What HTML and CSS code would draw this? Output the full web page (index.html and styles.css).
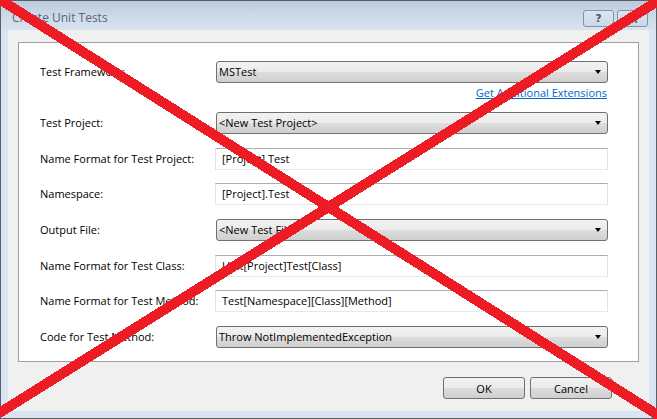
FILE: index.html
```html
<!DOCTYPE html>
<html>
<head>
<meta charset="utf-8">
<title>Create Unit Tests</title>
<link rel="stylesheet" href="styles.css">
</head>
<body>
<div class="window">
  <div class="titlebar">
    <span class="title">Create Unit Tests</span>
    <div class="caption-buttons">
      <span class="cap-btn help">?</span>
      <span class="cap-btn close">
        <svg width="11" height="9" viewBox="0 0 11 9"><path d="M1 0.5 L10 8.5 M10 0.5 L1 8.5" stroke="#5f6b7a" stroke-width="2" fill="none"/></svg>
      </span>
    </div>
  </div>
  <div class="frame">
    <div class="client">
      <div class="panel">
        <div class="row">
          <label class="lbl">Test Framework:</label>
          <div class="combo"><span>MSTest</span><i class="arrow"></i></div>
        </div>
        <div class="linkrow"><a class="link" href="#">Get Additional Extensions</a></div>
        <div class="rows">
          <div class="row">
            <label class="lbl">Test Project:</label>
            <div class="combo"><span>&lt;New Test Project&gt;</span><i class="arrow"></i></div>
          </div>
          <div class="row">
            <label class="lbl">Name Format for Test Project:</label>
            <div class="textbox">[Project].Test</div>
          </div>
          <div class="row">
            <label class="lbl">Namespace:</label>
            <div class="textbox">[Project].Test</div>
          </div>
          <div class="row">
            <label class="lbl">Output File:</label>
            <div class="combo"><span>&lt;New Test File&gt;</span><i class="arrow"></i></div>
          </div>
          <div class="row">
            <label class="lbl">Name Format for Test Class:</label>
            <div class="textbox">Unit[Project]Test[Class]</div>
          </div>
          <div class="row">
            <label class="lbl">Name Format for Test Method:</label>
            <div class="textbox">Test[Namespace][Class][Method]</div>
          </div>
          <div class="row">
            <label class="lbl">Code for Test Method:</label>
            <div class="combo"><span>Throw NotImplementedException</span><i class="arrow"></i></div>
          </div>
        </div>
      </div>
      <div class="buttons">
        <button class="btn">OK</button>
        <button class="btn">Cancel</button>
      </div>
    </div>
  </div>
</div>
<svg class="cross" width="657" height="419" viewBox="0 0 657 419">
  <line x1="-4" y1="-3" x2="661" y2="417" stroke="#ed1c24" stroke-width="10" shape-rendering="crispEdges"/>
  <line x1="-4" y1="415" x2="661" y2="-1" stroke="#ed1c24" stroke-width="10" shape-rendering="crispEdges"/>
</svg>
</body>
</html>
```

FILE: styles.css
```css
html, body {
  margin: 0;
  padding: 0;
}
body {
  width: 657px;
  height: 419px;
  overflow: hidden;
  position: relative;
  font-family: "Open Sans", "Noto Sans", "Liberation Sans", sans-serif;
  font-size: 11px;
  color: #000;
}
.window {
  width: 657px;
  height: 419px;
  box-sizing: border-box;
  border: 1px solid #5b5f66;
  background: #d9e5f2;
  display: flex;
  flex-direction: column;
}
.titlebar {
  height: 29px;
  flex: none;
  display: flex;
  align-items: flex-start;
  justify-content: space-between;
  background: linear-gradient(#bccbdd, #cfdcea 60%, #d6e2ef);
}
.title {
  margin: 9px 0 0 11px;
  font-size: 12px;
  line-height: 16px;
  color: #5a6472;
}
.caption-buttons {
  display: flex;
  gap: 3px;
  margin: 9px 8px 0 0;
}
.cap-btn {
  width: 29px;
  height: 15px;
  border: 1px solid #8393a8;
  border-radius: 3px;
  background: linear-gradient(#dbe5f1, #cbd8e8);
  display: flex;
  align-items: center;
  justify-content: center;
  color: #4b5563;
  font-family: "DejaVu Sans", sans-serif;
  font-weight: bold;
  font-size: 11px;
  line-height: 15px;
}
.frame {
  flex: 1;
  display: flex;
  padding: 0 7px 7px 7px;
}
.client {
  flex: 1;
  background: #f0f0f0;
  display: flex;
  flex-direction: column;
  padding: 12px 10px 0 10px;
}
.panel {
  height: 320px;
  box-sizing: border-box;
  background: #fff;
  border: 1px solid #a0a0a0;
  padding: 18px 29px 0 21px;
}
.row {
  display: grid;
  grid-template-columns: 176px 392px;
  align-items: center;
  height: 22px;
}
.rows {
  display: flex;
  flex-direction: column;
  gap: 13.67px;
}
.lbl {
  white-space: nowrap;
  line-height: 16px;
}
.combo {
  height: 22px;
  box-sizing: border-box;
  border: 1px solid #707070;
  border-radius: 3px;
  background: linear-gradient(#f2f2f2 0%, #ebebeb 48%, #dddddd 52%, #cfcfcf 100%);
  display: flex;
  align-items: center;
  justify-content: space-between;
  padding: 0 6px 0 2px;
  line-height: 16px;
}
.arrow {
  width: 0;
  height: 0;
  border-left: 3.5px solid transparent;
  border-right: 3.5px solid transparent;
  border-top: 4px solid #000;
}
.textbox {
  height: 22px;
  margin-left: -1px;
  box-sizing: border-box;
  background: #fff;
  border: 1px solid #e2e3ea;
  border-top-color: #abadb3;
  border-bottom-color: #e3e9ef;
  padding: 0 6px;
  line-height: 20px;
}
.linkrow {
  display: flex;
  justify-content: flex-end;
  width: 567px;
  margin: 3px 0 12px 0;
  line-height: 14px;
}
.link {
  color: #0066cc;
  text-decoration: underline;
}
.buttons {
  display: flex;
  justify-content: flex-end;
  gap: 5px;
  margin-top: 15px;
  padding-right: 27px;
}
.btn {
  width: 82px;
  height: 22px;
  box-sizing: border-box;
  border: 1px solid #707070;
  border-radius: 3px;
  background: linear-gradient(#f2f2f2 0%, #ebebeb 48%, #dddddd 52%, #cfcfcf 100%);
  font-family: inherit;
  font-size: 11px;
  color: #000;
  padding: 0;
}
.cross {
  position: absolute;
  left: 0;
  top: 0;
  pointer-events: none;
}
```
